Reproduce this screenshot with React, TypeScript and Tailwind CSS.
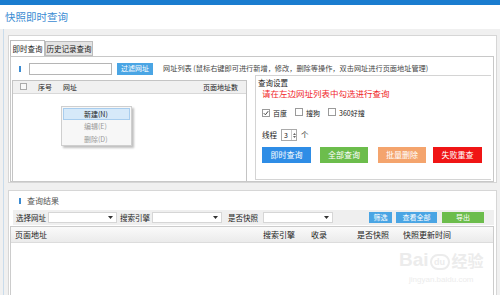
import React from "react";

const Check = ({ checked = false }: { checked?: boolean }) => (
  <span className="inline-flex w-[8px] h-[8px] border border-[#9a9a9a] bg-white items-center justify-center shrink-0">
    {checked && (
      <svg width="6" height="6" viewBox="0 0 6 6">
        <path d="M0.8 3.2 L2.4 4.8 L5.2 1.2" fill="none" stroke="#444" strokeWidth="1" />
      </svg>
    )}
  </span>
);

const Select = ({ w }: { w: string }) => (
  <div className={`${w} h-[11px] bg-white border border-[#d6d6d6] flex items-center justify-end pr-[3px]`}>
    <svg width="5" height="3" viewBox="0 0 5 3">
      <path d="M0 0 L5 0 L2.5 3 Z" fill="#333" />
    </svg>
  </div>
);

export default function App() {
  return (
    <div className="w-[500px] h-[295px] overflow-hidden bg-white relative font-['Noto_Sans_CJK_SC','Microsoft_YaHei',sans-serif] text-[#333]">
      <div className="h-[5px] bg-[#1a7ccf]" />
      <div className="h-[24px] flex items-center pl-[5px] text-[10.5px] text-[#3b8bd2]">快照即时查询</div>
      <div className="h-[266px] bg-[#f0f0f0] pl-[3px] pr-[3px]">
        <div className="h-full border-l border-[#c9dcec] pl-[4px] pt-[6px] flex flex-col">
          {/* top panel */}
          <div className="h-[148px] bg-white border border-[#d6d6d6] pl-[1px] pr-[2px] pt-[4px] flex flex-col">
            <div className="flex h-[16px] items-end">
              <div className="w-[35px] h-[16px] bg-white border border-b-0 border-[#bdbdbd] flex items-center justify-center text-[7.5px] text-[#222]">即时查询</div>
              <div className="w-[48px] h-[15px] bg-[#e4e4e4] border border-[#bdbdbd] flex items-center justify-center text-[7.5px] text-[#222]">历史记录查询</div>
            </div>
            <div className="flex-1 border border-[#c8c8c8] flex flex-col">
              <div className="mt-[5px] h-[13px] flex items-center">
                <div className="ml-[8px] w-[2px] h-[6px] bg-[#3b8bd2]" />
                <div className="ml-[8px] w-[83px] h-[12px] border border-[#b5b5b5] bg-white" />
                <div className="ml-[5px] w-[36px] h-[12px] bg-[#4aa5e4] text-white text-[7px] flex items-center justify-center">过滤网址</div>
                <div className="ml-[10px] text-[7.2px] text-[#444] whitespace-nowrap">网址列表 (鼠标右键即可进行新增，修改，删除等操作，双击网址进行页面地址管理)</div>
              </div>
              <div className="flex-1 flex">
                {/* list */}
                <div className="ml-[1px] mt-[5px] w-[235px] border border-[#c4c4c4] border-b-0 relative">
                  <div className="h-[13px] bg-[#f0f0f0] border-b border-[#d8d8d8] flex items-center text-[7px] text-[#222]">
                    <div className="ml-[7px]"><span className="inline-flex w-[7px] h-[7px] border border-[#aaa] bg-[#f8f8f8]" /></div>
                    <div className="ml-[11px]">序号</div>
                    <div className="ml-[11px]">网址</div>
                    <div className="ml-auto mr-[8px]">页面地址数</div>
                  </div>
                  <div className="absolute left-[48px] top-[25px] w-[71px] h-[40px] bg-[#f7f7f7] border border-[#cfcfcf] shadow-[2px_2px_2px_rgba(0,0,0,0.25)] flex flex-col pt-[1px] px-[1px] text-[7px]">
                    <div className="h-[12px] bg-[#d6e9f9] border border-[#a8cdee] flex items-center pl-[20px] text-[#222]">新建(N)</div>
                    <div className="h-[13px] flex items-center pl-[21px] text-[#9a9a9a]">编辑(E)</div>
                    <div className="h-[13px] flex items-center pl-[21px] text-[#9a9a9a]">删除(D)</div>
                  </div>
                </div>
                {/* settings */}
                <div className="ml-[8px] mb-[1px] w-[236px] border border-[#d4d4d4] border-r-0 flex flex-col">
                  <div className="mt-[1px] h-[11px] leading-[11px] pl-[2px] text-[7.5px] text-[#222]">查询设置</div>
                  <div className="h-[10px] leading-[10px] pl-[6px] text-[8.5px] text-[#f0262a]">请在左边网址列表中勾选进行查询</div>
                  <div className="mt-[10px] h-[10px] flex items-center pl-[6px] text-[7px] text-[#222]">
                    <Check checked />
                    <span className="ml-[3px]">百度</span>
                    <span className="ml-[8px]"><Check /></span>
                    <span className="ml-[3px]">搜狗</span>
                    <span className="ml-[8px]"><Check /></span>
                    <span className="ml-[3px]">360好搜</span>
                  </div>
                  <div className="mt-[11px] h-[12px] flex items-center pl-[6px] text-[7.5px] text-[#222]">
                    <span>线程</span>
                    <div className="ml-[4px] w-[16px] h-[12px] border border-[#aaa] bg-white flex items-center">
                      <span className="ml-[2px] text-[7px]">3</span>
                      <div className="ml-auto w-[5px] h-full border-l border-[#ccc] flex flex-col items-center justify-center gap-[1px]">
                        <svg width="3" height="2" viewBox="0 0 3 2"><path d="M0 2 L1.5 0 L3 2Z" fill="#666" /></svg>
                        <svg width="3" height="2" viewBox="0 0 3 2"><path d="M0 0 L1.5 2 L3 0Z" fill="#666" /></svg>
                      </div>
                    </div>
                    <span className="ml-[4px]">个</span>
                  </div>
                  <div className="mt-[6px] h-[16px] flex pl-[6px] text-[8px] text-white">
                    <div className="w-[49px] h-full bg-[#2e8de6] flex items-center justify-center">即时查询</div>
                    <div className="ml-[9px] w-[48px] h-full bg-[#6cbd4c] flex items-center justify-center">全部查询</div>
                    <div className="ml-[10px] w-[48px] h-full bg-[#f4a46d] flex items-center justify-center">批量删除</div>
                    <div className="ml-[7px] w-[49px] h-full bg-[#f01515] flex items-center justify-center">失败重查</div>
                  </div>
                </div>
              </div>
            </div>
          </div>
          {/* bottom panel */}
          <div className="mt-[7px] flex-1 bg-white border border-[#d6d6d6] border-b-0 pl-[1px] pr-[2px] flex flex-col">
            <div className="mt-[3px] h-[14px] flex items-center">
              <div className="ml-[9px] w-[2px] h-[6px] bg-[#3b8bd2]" />
              <div className="ml-[6px] text-[8px] text-[#555]">查询结果</div>
            </div>
            <div className="mt-[2px] ml-[3px] h-[15px] bg-[#efefef] flex items-center text-[7.5px] text-[#222]">
              <span className="ml-[3px]">选择网址</span>
              <div className="ml-[2px]"><Select w="w-[69px]" /></div>
              <span className="ml-[3px]">搜索引擎</span>
              <div className="ml-[2px]"><Select w="w-[70px]" /></div>
              <span className="ml-[6px]">是否快照</span>
              <div className="ml-[5px]"><Select w="w-[70px]" /></div>
              <div className="ml-[36px] w-[23px] h-[11px] bg-[#4aa5e4] text-white text-[7px] flex items-center justify-center">筛选</div>
              <div className="ml-[4px] w-[41px] h-[11px] bg-[#4aa5e4] text-white text-[7px] flex items-center justify-center">查看全部</div>
              <div className="ml-[5px] w-[42px] h-[11px] bg-[#6cbd4c] text-white text-[7px] flex items-center justify-center">导出</div>
            </div>
            <div className="mt-[1px] flex-1 border border-[#cccccc] border-b-0">
              <div className="h-[16px] bg-gradient-to-b from-[#fafafa] to-[#ebebeb] border-b border-[#dcdcdc] flex items-center text-[8px] text-[#222]">
                <span className="ml-[4px]">页面地址</span>
                <span className="ml-[216px]">搜索引擎</span>
                <span className="ml-[16px]">收录</span>
                <span className="ml-[30px]">是否快照</span>
                <span className="ml-[14px]">快照更新时间</span>
              </div>
            </div>
          </div>
        </div>
      </div>
      {/* watermark */}
      <div className="absolute left-[399px] top-[250px] flex flex-col items-center text-[#ececec] pointer-events-none">
        <div className="flex items-end">
          <span className="text-[19px] font-bold leading-[20px] font-['Liberation_Sans',sans-serif]">Bai</span>
          <span className="ml-[1px] w-[20px] h-[16px] rounded-full border-2 border-[#ececec] text-[9px] leading-[12px] text-center font-bold font-['Liberation_Sans',sans-serif]">du</span>
          <span className="ml-[2px] text-[16px] leading-[20px] font-bold">经验</span>
        </div>
        <div className="mt-[4px] text-[8px] font-['Liberation_Sans',sans-serif]">jingyan.baidu.com</div>
      </div>
    </div>
  );
}
